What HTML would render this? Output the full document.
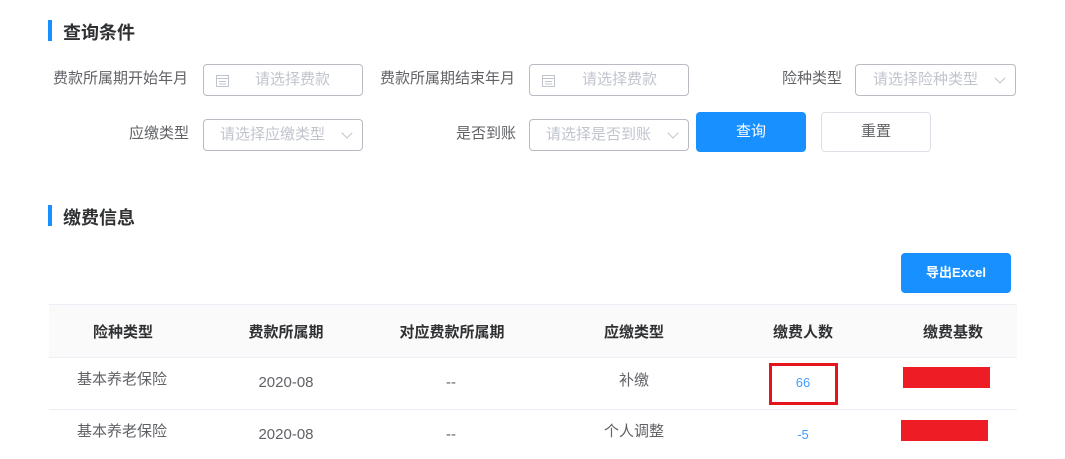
<!DOCTYPE html>
<html><head><meta charset="utf-8"><style>
*{margin:0;padding:0;box-sizing:border-box}
body{width:1065px;height:459px;overflow:hidden;background:#fff;font-family:"Liberation Sans","Noto Sans CJK SC",sans-serif;color:#606266;font-size:15px;position:relative}
.a{position:absolute;white-space:nowrap}
.bar{position:absolute;left:48px;width:4px;height:21px;background:#1890ff}
.t{font-size:18px;font-weight:bold;color:#303133}
.lbl{text-align:right;line-height:32px;color:#606266}
.inp{position:absolute;height:32px;border:1px solid #b8bbc2;border-radius:4px;color:#c0c4cc;line-height:30px;font-size:15px}
.chev{position:absolute;right:11px;top:9px;width:8px;height:8px;border-right:1px solid #c0c4cc;border-bottom:1px solid #c0c4cc;transform:rotate(45deg)}
.btn{position:absolute;border-radius:4px;text-align:center;font-size:15px}
.c{position:absolute;text-align:center;transform:translateX(-50%);white-space:nowrap}
.h{font-weight:bold;color:#303133;top:321px}
</style></head><body>
<div class="bar" style="top:20px"></div><div class="a t" style="left:63px;top:19px">查询条件</div>

<div class="a lbl" style="left:30px;width:158px;top:63px">费款所属期开始年月</div>
<div class="inp" style="left:203px;top:64px;width:160px"><svg style="position:absolute;left:12px;top:9px" width="13" height="13"><rect x="0.5" y="1.5" width="12" height="11" fill="none" stroke="#c0c4cc"/><line x1="0" y1="4.5" x2="13" y2="4.5" stroke="#c0c4cc"/><line x1="3" y1="7.5" x2="10" y2="7.5" stroke="#c0c4cc"/><line x1="3" y1="10" x2="10" y2="10" stroke="#c0c4cc"/></svg><span class="a" style="left:51px">请选择费款</span></div>

<div class="a lbl" style="left:355px;width:160px;top:63px">费款所属期结束年月</div>
<div class="inp" style="left:529px;top:64px;width:160px"><svg style="position:absolute;left:12px;top:9px" width="13" height="13"><rect x="0.5" y="1.5" width="12" height="11" fill="none" stroke="#c0c4cc"/><line x1="0" y1="4.5" x2="13" y2="4.5" stroke="#c0c4cc"/><line x1="3" y1="7.5" x2="10" y2="7.5" stroke="#c0c4cc"/><line x1="3" y1="10" x2="10" y2="10" stroke="#c0c4cc"/></svg><span class="a" style="left:52px">请选择费款</span></div>

<div class="a lbl" style="left:740px;width:102px;top:63px">险种类型</div>
<div class="inp" style="left:855px;top:64px;width:161px"><span class="a" style="left:17px">请选择险种类型</span><div class="chev"></div></div>

<div class="a lbl" style="left:40px;width:149px;top:118px">应缴类型</div>
<div class="inp" style="left:203px;top:119px;width:160px"><span class="a" style="left:16px">请选择应缴类型</span><div class="chev"></div></div>

<div class="a lbl" style="left:400px;width:116px;top:118px">是否到账</div>
<div class="inp" style="left:529px;top:119px;width:160px"><span class="a" style="left:16px">请选择是否到账</span><div class="chev"></div></div>

<div class="btn" style="left:696px;top:112px;width:110px;height:40px;line-height:40px;background:#1890ff;color:#fff">查询</div>
<div class="btn" style="left:821px;top:112px;width:110px;height:40px;line-height:38px;border:1px solid #dcdfe6;color:#606266">重置</div>

<div class="bar" style="top:205px"></div><div class="a t" style="left:63px;top:204px">缴费信息</div>

<div class="btn" style="left:901px;top:253px;width:110px;height:40px;line-height:40px;background:#1890ff;color:#fff;font-size:13px;font-weight:bold">导出Excel</div>

<div class="a" style="left:49px;top:304px;width:968px;height:54px;background:#fafafa;border-top:1px solid #ebeef5;border-bottom:1px solid #ebeef5"></div>
<div class="a" style="left:49px;top:409px;width:968px;height:1px;background:#ebeef5"></div>

<div class="c h" style="left:123px">险种类型</div>
<div class="c h" style="left:286px">费款所属期</div>
<div class="c h" style="left:452px">对应费款所属期</div>
<div class="c h" style="left:634px">应缴类型</div>
<div class="c h" style="left:803px">缴费人数</div>
<div class="c h" style="left:953px">缴费基数</div>

<div class="c" style="left:122px;top:368px">基本养老保险</div>
<div class="c" style="left:286px;top:374px">2020-08</div>
<div class="c" style="left:451px;top:374px">--</div>
<div class="c" style="left:634px;top:369px">补缴</div>
<div class="a" style="left:769px;top:363px;width:69px;height:42px;border:3px solid #e5141c"></div>
<div class="c" style="left:803px;top:375px;color:#409eff;font-size:13px">66</div>
<div class="a" style="left:903px;top:367px;width:87px;height:21px;background:#ee1c25"></div>

<div class="c" style="left:122px;top:420px">基本养老保险</div>
<div class="c" style="left:286px;top:426px">2020-08</div>
<div class="c" style="left:451px;top:426px">--</div>
<div class="c" style="left:634px;top:420px">个人调整</div>
<div class="c" style="left:803px;top:427px;color:#409eff;font-size:13px">-5</div>
<div class="a" style="left:901px;top:420px;width:87px;height:21px;background:#ee1c25"></div>
</body></html>
